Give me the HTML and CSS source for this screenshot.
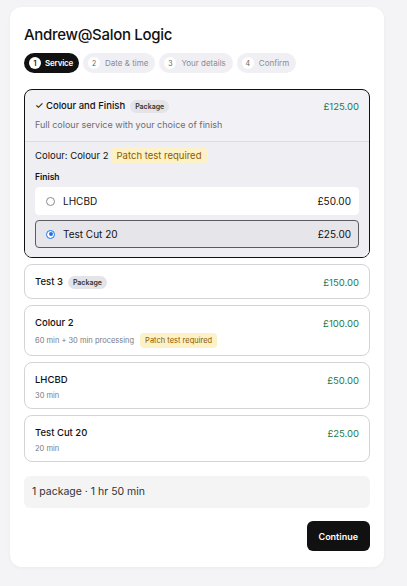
FILE: index.html
```html
<!DOCTYPE html>
<html>
<head>
<meta charset="utf-8">
<link rel="stylesheet" href="styles.css">
</head>
<body>
<div class="card">
  <h1 class="title">Andrew@Salon Logic</h1>
  <div class="steps">
    <div class="step active"><span class="num">1</span>Service</div>
    <div class="step"><span class="num">2</span>Date &amp; time</div>
    <div class="step"><span class="num">3</span>Your details</div>
    <div class="step"><span class="num">4</span>Confirm</div>
  </div>

  <div class="list">
    <div class="svc selected">
      <div class="svc-head">
        <div class="row">
          <div class="name">✓ Colour and Finish <span class="pkg">Package</span></div>
          <div class="price">£125.00</div>
        </div>
        <div class="desc">Full colour service with your choice of finish</div>
      </div>
      <div class="svc-body">
        <div class="colour-line">Colour: Colour 2 <span class="patch big">Patch test required</span></div>
        <div class="finish-label">Finish</div>
        <div class="options">
          <label class="opt"><span class="radio"></span><span class="opt-name">LHCBD</span><span class="opt-price">£50.00</span></label>
          <label class="opt on"><span class="radio checked"></span><span class="opt-name">Test Cut 20</span><span class="opt-price">£25.00</span></label>
        </div>
      </div>
    </div>

    <div class="svc solo">
      <div class="row">
        <div class="name">Test 3 <span class="pkg">Package</span></div>
        <div class="price">£150.00</div>
      </div>
    </div>

    <div class="svc">
      <div class="row">
        <div class="name">Colour 2</div>
        <div class="price">£100.00</div>
      </div>
      <div class="meta">60 min + 30 min processing <span class="patch">Patch test required</span></div>
    </div>

    <div class="svc">
      <div class="row">
        <div class="name">LHCBD</div>
        <div class="price">£50.00</div>
      </div>
      <div class="meta">30 min</div>
    </div>

    <div class="svc">
      <div class="row">
        <div class="name">Test Cut 20</div>
        <div class="price">£25.00</div>
      </div>
      <div class="meta">20 min</div>
    </div>
  </div>

  <div class="summary">1 package · 1 hr 50 min</div>
  <div class="actions"><button class="btn">Continue</button></div>
</div>
</body>
</html>
```
FILE: styles.css
```css
* { box-sizing: border-box; }
html, body { margin: 0; padding: 0; }
body {
  background: #f4f4f6;
  font-family: Inter, "Noto Sans", sans-serif;
  color: #111;
  padding: 7px 23px 19px 10px;
}
.card {
  background: #fff;
  border-radius: 12px;
  padding: 18px 14px 16px 14px;
  box-shadow: 0 1px 4px rgba(0,0,0,0.04);
}
.title {
  margin: 0;
  font-size: 15px;
  font-weight: 500;
  line-height: 20px;
  letter-spacing: -0.3px;
}
.steps {
  display: flex;
  gap: 4px;
  margin-top: 8px;
}
.step {
  display: flex;
  align-items: center;
  gap: 5px;
  height: 20px;
  padding: 0 7px 0 5px;
  border-radius: 10px;
  background: #f0f0f4;
  color: #8a8a94;
  font-size: 8px;
}
.step .num {
  width: 12px; height: 12px;
  border-radius: 50%;
  background: #fff;
  color: #666;
  font-size: 7px;
  display: flex; align-items: center; justify-content: center;
}
.step.active {
  background: #111;
  color: #fff;
  font-weight: 600;
  padding-right: 6px;
  gap: 4px;
  letter-spacing: -0.2px;
}
.step.active .num { color: #111; font-weight: 600; }
.list {
  display: flex;
  flex-direction: column;
  gap: 6px;
  margin-top: 16px;
}
.svc {
  border: 1px solid #d4d4d8;
  border-radius: 8px;
  padding: 10px 10px 7px 10px;
  background: #fff;
}
.svc.solo {
  padding-bottom: 9px;
}
.svc.selected {
  border-color: #111;
  background: #f2f2f6;
  padding: 0;
  overflow: hidden;
}
.svc-head {
  padding: 9px 10px 10px 10px;
  border-bottom: 1px solid #dcdce2;
}
.svc-body {
  padding: 5px 10px 9px 10px;
  background: #efeff3;
}
.row {
  display: flex;
  justify-content: space-between;
  align-items: center;
  min-height: 14px;
}
.name {
  font-size: 9.5px;
  font-weight: 500;
  display: flex;
  align-items: center;
  gap: 5px;
  line-height: 14px;
}
.pkg {
  background: #e4e4e8;
  color: #333;
  font-size: 7px;
  font-weight: 600;
  padding: 2px 5px;
  border-radius: 8px;
  line-height: 9px;
}
.price {
  color: #1e7a4c;
  font-size: 9.5px;
}
.desc {
  color: #6b6b74;
  font-size: 9px;
  margin-top: 6px;
  line-height: 12px;
}
.colour-line {
  font-size: 9.5px;
  display: flex;
  align-items: center;
  gap: 2px;
  line-height: 17px;
}
.patch {
  background: #fdf1c7;
  color: #8a5a00;
  font-size: 7.5px;
  padding: 2px 5px;
  border-radius: 4px;
  line-height: 11px;
}
.patch.big {
  font-size: 9.5px;
  line-height: 13px;
  padding: 2px 6px;
  color: #8d5c00;
}
.finish-label {
  font-size: 8.5px;
  font-weight: 600;
  margin-top: 7px;
  line-height: 12px;
}
.options {
  display: flex;
  flex-direction: column;
  gap: 5px;
  margin-top: 4px;
}
.opt {
  display: flex;
  align-items: center;
  height: 28px;
  padding: 0 7px 0 10px;
  background: #fff;
  border: 1px solid #fff;
  border-radius: 4px;
  font-size: 10px;
}
.opt.on {
  background: #e5e5ea;
  border-color: #5a5a60;
}
.radio {
  width: 9px; height: 9px;
  border-radius: 50%;
  border: 1px solid #8a8a8a;
  background: #fff;
  margin-right: 8px;
  position: relative;
}
.radio.checked {
  border-color: #1a73e8;
}
.radio.checked::after {
  content: "";
  position: absolute;
  left: 1.5px; top: 1.5px;
  width: 4px; height: 4px;
  border-radius: 50%;
  background: #1a73e8;
}
.opt-name { flex: 1; }
.opt-price { font-size: 10px; }
.meta {
  color: #7a7a84;
  font-size: 7.5px;
  margin-top: 3px;
  display: flex;
  align-items: center;
  gap: 6px;
  line-height: 11px;
}
.summary {
  margin-top: 14px;
  background: #f4f4f5;
  border-radius: 6px;
  padding: 9px 8px;
  font-size: 10.5px;
  color: #333;
  line-height: 14px;
}
.actions {
  display: flex;
  justify-content: flex-end;
  margin-top: 13px;
}
.btn {
  background: #111;
  color: #fff;
  border: none;
  border-radius: 6px;
  height: 30px;
  padding: 0 12px;
  font-family: inherit;
  font-size: 9px;
  font-weight: 600;
}
```
